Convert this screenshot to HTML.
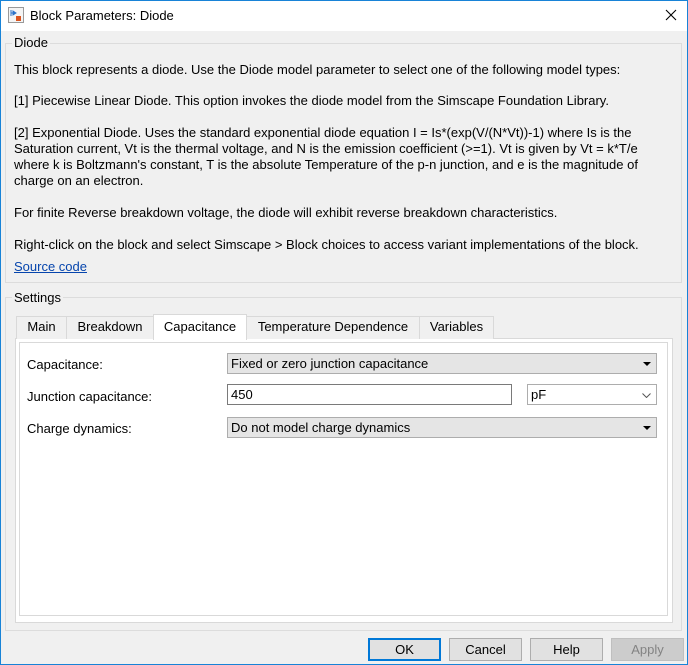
<!DOCTYPE html>
<html><head><style>
*{box-sizing:border-box;margin:0;padding:0}
body{width:688px;height:665px;background:#f0f0f0;font-family:"Liberation Sans",sans-serif;font-size:13px;color:#000;position:relative;overflow:hidden;border:1px solid #1883d7}
.a{position:absolute}
.t{position:absolute;white-space:nowrap;line-height:16px}
.gb{position:absolute;border:1px solid #dcdcdc}
.leg{position:absolute;background:#f0f0f0;padding:0 2px;line-height:14px}
.dd{position:absolute;background:#e5e5e5;border:1px solid #adadad;height:21px;padding:2px 3px;line-height:15px}
.dd:after{content:"";position:absolute;right:5px;top:8px;border-left:4px solid transparent;border-right:4px solid transparent;border-top:4px solid #000}
.in{position:absolute;background:#fff;border:1px solid #7a7a7a;height:21px;padding:2px 3px;line-height:15px}
.tab{position:absolute;top:316px;height:23px;border:1px solid #d9d9d9;border-bottom:none;background:#f0f0f0;text-align:center;line-height:20px}
.btn{position:absolute;top:637px;height:23px;width:73px;border:1px solid #adadad;background:#e1e1e1;text-align:center;line-height:21px}
</style></head><body>
<div class="a" style="left:0;top:0;width:686px;height:30px;background:#fff"></div>
<svg class="a" style="left:7px;top:6px" width="16" height="16"><rect x="0.5" y="0.5" width="15" height="15" fill="#f4f4f4" stroke="#999"/><path d="M3 3v6M3 6h4M5 4l3 2-3 2z" stroke="#2a72c8" fill="#2a72c8"/><rect x="8" y="9" width="5" height="5" fill="#d9531e"/></svg>
<div class="t" style="left:29px;top:7px">Block Parameters: Diode</div>
<svg class="a" style="left:664px;top:8px" width="12" height="12"><path d="M1 1L11 11M11 1L1 11" stroke="#000" stroke-width="1.1"/></svg>

<div class="gb" style="left:4px;top:42px;width:677px;height:240px"></div>
<div class="leg" style="left:11px;top:35px">Diode</div>
<div class="t" style="left:13px;top:61px">This block represents a diode. Use the Diode model parameter to select one of the following model types:</div>
<div class="t" style="left:13px;top:92px">[1] Piecewise Linear Diode. This option invokes the diode model from the Simscape Foundation Library.</div>
<div class="t" style="left:13px;top:124px">[2] Exponential Diode. Uses the standard exponential diode equation I = Is*(exp(V/(N*Vt))-1) where Is is the</div>
<div class="t" style="left:13px;top:140px">Saturation current, Vt is the thermal voltage, and N is the emission coefficient (&gt;=1). Vt is given by Vt = k*T/e</div>
<div class="t" style="left:13px;top:156px">where k is Boltzmann's constant, T is the absolute Temperature of the p-n junction, and e is the magnitude of</div>
<div class="t" style="left:13px;top:172px">charge on an electron.</div>
<div class="t" style="left:13px;top:204px">For finite Reverse breakdown voltage, the diode will exhibit reverse breakdown characteristics.</div>
<div class="t" style="left:13px;top:236px">Right-click on the block and select Simscape &gt; Block choices to access variant implementations of the block.</div>
<div class="t" style="left:13px;top:258px;color:#0645ad;text-decoration:underline">Source code</div>

<div class="gb" style="left:4px;top:296px;width:677px;height:334px"></div>
<div class="leg" style="left:11px;top:290px">Settings</div>
<div class="a" style="left:14px;top:337px;width:658px;height:285px;border:1px solid #d9d9d9;background:#fff"></div>
<div class="a" style="left:18px;top:341px;width:649px;height:274px;border:1px solid #d9d9d9;background:#fff"></div>
<div class="tab" style="left:15px;top:315px;width:51px">Main</div>
<div class="tab" style="left:65px;top:315px;width:88px">Breakdown</div>
<div class="tab" style="left:245px;top:315px;width:174px">Temperature Dependence</div>
<div class="tab" style="left:418px;top:315px;width:75px">Variables</div>
<div class="tab" style="left:152px;top:313px;height:26px;width:94px;background:#fff;line-height:24px">Capacitance</div>

<div class="t" style="left:26px;top:356px">Capacitance:</div>
<div class="dd" style="left:226px;top:352px;width:430px">Fixed or zero junction capacitance</div>
<div class="t" style="left:26px;top:388px">Junction capacitance:</div>
<div class="in" style="left:226px;top:383px;width:285px">450</div>
<div class="in" style="left:526px;top:383px;width:130px;border-color:#adadad">pF<svg class="a" style="right:5px;top:8px" width="9" height="5"><path d="M0.5 0.5L4.5 4.5L8.5 0.5" stroke="#555" fill="none"/></svg></div>
<div class="t" style="left:26px;top:420px">Charge dynamics:</div>
<div class="dd" style="left:226px;top:416px;width:430px">Do not model charge dynamics</div>

<div class="btn" style="left:367px;border:2px solid #0078d7;line-height:19px">OK</div>
<div class="btn" style="left:448px">Cancel</div>
<div class="btn" style="left:529px">Help</div>
<div class="btn" style="left:610px;color:#838383;background:#cccccc;border-color:#bfbfbf">Apply</div>
</body></html>
